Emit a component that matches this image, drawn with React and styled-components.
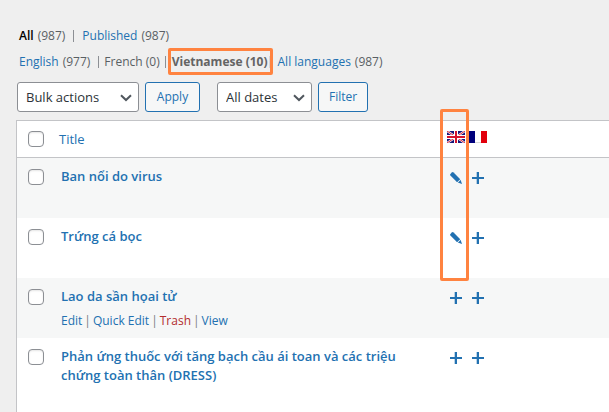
import React from "react";
import styled, { createGlobalStyle, css } from "styled-components";

const colors = {
  page: "#efefef",
  link: "#2271b1",
  text: "#5a5f64",
  strong: "#000000",
  field: "#2c3338",
  border: "#c3c4c7",
  control: "#8c8f94",
  stripe: "#f6f7f7",
  danger: "#b32d2e",
  mark: "#ff8340",
};

const GlobalStyle = createGlobalStyle`
  *, *::before, *::after { box-sizing: border-box; }
  html, body { margin: 0; background: ${colors.page}; }
  body {
    color: ${colors.text};
    font-family: "Open Sans", "Noto Sans", sans-serif;
    font-size: 12px;
    line-height: 18px;
    overflow-x: hidden;
  }
  button, select { font: inherit; }
`;

const Page = styled.main`
  min-height: 100vh;
  padding: 27px 0 0 16px;
  display: flex;
  flex-direction: column;
  overflow: hidden;
`;

const FilterList = styled.ul`
  list-style: none;
  margin: 0;
  padding: 0 0 8px 3px;
  display: flex;
  white-space: nowrap;
`;

const FilterItem = styled.li`
  position: relative;
  display: flex;
  gap: 4px;
`;

const Divider = styled.span`
  width: 1px;
  height: 12px;
  margin: 3px ${(p) => p.$after || 8}px 0 ${(p) => p.$before || 8}px;
  background: ${(p) => (p.$faint ? "#d5d6d8" : "#8c8f94")};
`;

const Link = styled.a`
  color: ${colors.link};
  text-decoration: none;
  ${(p) => p.$current && css`color: ${colors.strong}; font-weight: 600;`}
  ${(p) => p.$danger && css`color: ${colors.danger};`}
`;

const ActiveFilter = styled.span`
  font-weight: 700;
  color: #646464;
`;

const Highlight = styled.span`
  position: absolute;
  border: 3px solid ${colors.mark};
  border-radius: 2px;
  pointer-events: none;
`;

const FilterHighlight = styled(Highlight)`
  inset: -5px -5px -4px -4px;
`;

const ColumnHighlight = styled(Highlight)`
  top: -12px;
  left: -4px;
  width: 29px;
  height: 172px;
  z-index: 1;
`;

const Toolbar = styled.form`
  display: flex;
  gap: 17px;
  padding: 3px 0 8px 1px;
`;

const Group = styled.div`
  display: flex;
  gap: 6px;
`;

const SelectBox = styled.label`
  position: relative;
  width: ${(p) => p.$width}px;

  svg {
    position: absolute;
    right: 7px;
    top: 9px;
    pointer-events: none;
  }
`;

const Select = styled.select`
  appearance: none;
  width: 100%;
  height: 30px;
  padding: 0 24px 0 8px;
  border: 1px solid ${colors.control};
  border-radius: 3px;
  background: #fff;
  color: ${colors.field};
  font-size: 13px;
`;

const Button = styled.button`
  height: 30px;
  padding: 0 10px;
  min-width: ${(p) => p.$width}px;
  border: 1px solid ${colors.link};
  border-radius: 3px;
  background: ${colors.stripe};
  color: ${colors.link};
`;

const Table = styled.table`
  width: 100%;
  table-layout: fixed;
  border-spacing: 0;
  border: 1px solid ${colors.border};
  border-right: 0;
  background: #fff;
`;

const CheckCol = styled.col`width: 42px;`;
const TitleCol = styled.col`width: 65%;`;
const LangCol = styled.col`width: 22px;`;

const HeadCell = styled.th`
  position: relative;
  height: 37px;
  padding: ${(p) => (p.$lang ? "0 1px 0 3px" : "0")};
  border-bottom: 1px solid ${colors.border};
  text-align: left;
  font-weight: 400;
  font-size: 13px;

  > svg { display: block; margin-top: -4px; }
`;

const Row = styled.tr`
  height: 60px;
  &:nth-child(odd) { background: ${colors.stripe}; }
  &:last-child { height: 90px; background: #fff; }
`;

const Cell = styled.td`
  padding: ${(p) => (p.$lang ? "12px 3px 0 5px" : "9px 8px 0 2px")};
  vertical-align: top;
`;

const CheckCell = styled.td`
  padding: 11px 0 0 11px;
  vertical-align: top;
  line-height: 0;
`;

const HeadCheck = styled(HeadCell)`
  padding-left: 11px;
  line-height: 0;
`;

const Checkbox = styled.input`
  appearance: none;
  width: 16px;
  height: 16px;
  margin: 0;
  border: 1px solid ${colors.control};
  border-radius: 4px;
  background: #fff;
  box-shadow: inset 0 1px 2px rgba(0, 0, 0, 0.1);
  &:checked { background: ${colors.link}; }
`;

const Title = styled(Link)`
  display: block;
  font-size: 13px;
  font-weight: 600;
  line-height: 19px;
`;

const Actions = styled.div`
  display: flex;
  gap: 2px;
  padding-top: 6px;
  color: #787c82;
`;

const IconLink = styled.a`
  display: block;
  height: 16px;
  svg { display: block; }
`;

const Chevron = () => (
  <svg width="12" height="12" viewBox="0 0 12 12" aria-hidden="true">
    <path d="M1 4.2 6 9 11 4.2" fill="none" stroke="#50575e" strokeWidth="2" />
  </svg>
);

const Plus = () => (
  <svg width="14" height="16" viewBox="0 0 14 16" aria-hidden="true">
    <path d="M5.7 2H8v5h5v2H8v5H5.7V9H1V7h4.7z" fill={colors.link} />
  </svg>
);

const Pencil = () => (
  <svg width="14" height="16" viewBox="0 0 14 16" aria-hidden="true">
    <path d="M1.2 4.2 2.8 2.4Q3.7 1.7 4.6 2.5L11.2 9.2 8.1 12.3 1.4 5.6Q.8 4.9 1.2 4.2Z" fill={colors.link} />
    <path d="M11.6 9.8 13 14 8.8 12.6Z" fill={colors.link} />
    <path d="m8.6 12.6 3-3" stroke="#fff" strokeWidth=".5" />
  </svg>
);

const BritishFlag = () => (
  <svg width="18" height="12" viewBox="0 0 18 12" role="img" aria-label="English">
    <path fill="#15157a" d="M0 0h18v12H0z" />
    <path d="m0 0 18 12M18 0 0 12" stroke="#fff" strokeWidth="2.2" />
    <path d="m0 0 18 12M18 0 0 12" stroke="#d81e35" strokeWidth="1" />
    <path d="M9 0v12M0 6h18" stroke="#fff" strokeWidth="4" />
    <path d="M9 0v12M0 6h18" stroke="#d4112c" strokeWidth="2" />
  </svg>
);

const FrenchFlag = () => (
  <svg width="18" height="12" viewBox="0 0 18 12" role="img" aria-label="French">
    <path fill="#00007c" d="M0 0h6v12H0z" />
    <path fill="#fff" d="M6 0h6v12H6z" />
    <path fill="#e2000c" d="M12 0h6v12h-6z" />
    <path fill="#d9d9d9" d="M6 11h6v1H6z" />
  </svg>
);

const posts = [
  { title: "Ban nổi do virus", translated: true },
  { title: "Trứng cá bọc", translated: true },
  { title: "Lao da sần họai tử", actions: true },
  { title: "Phản ứng thuốc với tăng bạch cầu ái toan và các triệu chứng toàn thân (DRESS)" },
];

export default function App() {
  return (
    <>
      <GlobalStyle />
      <Page>
        <FilterList>
          <FilterItem><Link href="#all" $current>All</Link> (987)</FilterItem>
          <Divider />
          <FilterItem><Link href="#published">Published</Link> (987)</FilterItem>
        </FilterList>
        <FilterList>
          <FilterItem><Link href="#english">English</Link> (977)</FilterItem>
          <Divider $after={5} />
          <FilterItem>French (0)</FilterItem>
          <Divider $before={5} $after={6} />
          <FilterItem>
            <ActiveFilter>Vietnamese (10)</ActiveFilter>
            <FilterHighlight />
          </FilterItem>
          <Divider $before={1} $faint />
          <FilterItem><Link href="#languages">All languages</Link> (987)</FilterItem>
        </FilterList>
        <Toolbar onSubmit={(e) => e.preventDefault()}>
          <Group>
            <SelectBox $width={122}>
              <Select aria-label="Bulk actions"><option>Bulk actions</option></Select>
              <Chevron />
            </SelectBox>
            <Button type="submit" $width={55}>Apply</Button>
          </Group>
          <Group>
            <SelectBox $width={95}>
              <Select aria-label="Date"><option>All dates</option></Select>
              <Chevron />
            </SelectBox>
            <Button type="submit" $width={50}>Filter</Button>
          </Group>
        </Toolbar>
        <Table>
          <colgroup><CheckCol /><TitleCol /><LangCol /><LangCol /><col /></colgroup>
          <thead>
            <tr>
              <HeadCheck><Checkbox type="checkbox" aria-label="Select all" /></HeadCheck>
              <HeadCell><Link href="#title">Title</Link></HeadCell>
              <HeadCell $lang><BritishFlag /><ColumnHighlight /></HeadCell>
              <HeadCell $lang><FrenchFlag /></HeadCell>
              <HeadCell />
            </tr>
          </thead>
          <tbody>
            {posts.map((post) => (
              <Row key={post.title}>
                <CheckCell><Checkbox type="checkbox" aria-label={post.title} /></CheckCell>
                <Cell>
                  <Title href="#post">{post.title}</Title>
                  {post.actions && (
                    <Actions>
                      <Link href="#edit">Edit</Link>|
                      <Link href="#quick">Quick Edit</Link>|
                      <Link href="#trash" $danger>Trash</Link>|
                      <Link href="#view">View</Link>
                    </Actions>
                  )}
                </Cell>
                <Cell $lang>
                  <IconLink href="#en" aria-label="English translation">{post.translated ? <Pencil /> : <Plus />}</IconLink>
                </Cell>
                <Cell $lang>
                  <IconLink href="#fr" aria-label="French translation"><Plus /></IconLink>
                </Cell>
                <td />
              </Row>
            ))}
          </tbody>
        </Table>
      </Page>
    </>
  );
}
